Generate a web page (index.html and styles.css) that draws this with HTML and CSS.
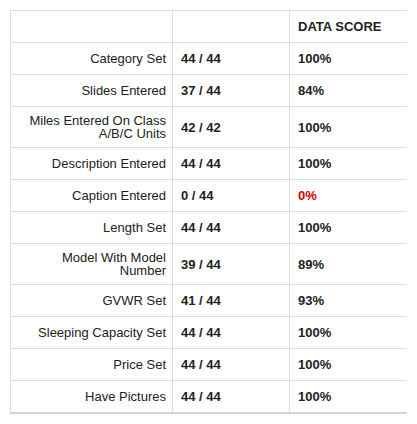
FILE: index.html
```html
<!DOCTYPE html>
<html>
<head>
<meta charset="utf-8">
<link rel="stylesheet" href="styles.css">
</head>
<body>
<table class="score-table">
  <colgroup>
    <col class="col-label">
    <col class="col-count">
    <col class="col-score">
  </colgroup>
  <thead>
    <tr><th class="label"></th><th></th><th>DATA SCORE</th></tr>
  </thead>
  <tbody>
    <tr><td class="label">Category Set</td><td>44 / 44</td><td>100%</td></tr>
    <tr><td class="label">Slides Entered</td><td>37 / 44</td><td>84%</td></tr>
    <tr><td class="label">Miles Entered On Class A/B/C Units</td><td>42 / 42</td><td>100%</td></tr>
    <tr><td class="label">Description Entered</td><td>44 / 44</td><td>100%</td></tr>
    <tr><td class="label">Caption Entered</td><td>0 / 44</td><td class="bad">0%</td></tr>
    <tr><td class="label">Length Set</td><td>44 / 44</td><td>100%</td></tr>
    <tr><td class="label">Model With Model Number</td><td>39 / 44</td><td>89%</td></tr>
    <tr><td class="label">GVWR Set</td><td>41 / 44</td><td>93%</td></tr>
    <tr><td class="label">Sleeping Capacity Set</td><td>44 / 44</td><td>100%</td></tr>
    <tr><td class="label">Price Set</td><td>44 / 44</td><td>100%</td></tr>
    <tr><td class="label">Have Pictures</td><td>44 / 44</td><td>100%</td></tr>
  </tbody>
</table>
</body>
</html>
```
FILE: styles.css
```css
html, body {
  background: #fff;
}
body {
  margin: 10px;
  font-family: "Liberation Sans", Arial, Helvetica, sans-serif;
  font-size: 13px;
  color: #222;
}
.score-table {
  border-collapse: collapse;
  table-layout: fixed;
  width: 397px;
  border-bottom: 2px solid #d4d4d4;
}
.col-label { width: 162px; }
.col-count { width: 117px; }
.col-score { width: 118px; }
.score-table th,
.score-table td {
  border: 1px solid #dcdcdc;
  padding: 7px 8px;
  line-height: 17px;
  font-weight: bold;
  text-align: left;
  vertical-align: middle;
}
.score-table tbody tr:last-child td {
  border-bottom: 2px solid #d4d4d4;
}
.score-table .label {
  font-weight: normal;
  text-align: right;
  line-height: 13px;
  padding-right: 6px;
}
.score-table .bad {
  color: #d40000;
}
```
